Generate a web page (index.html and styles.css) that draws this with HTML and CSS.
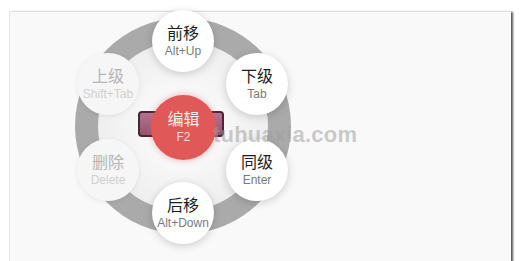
FILE: index.html
```html
<!DOCTYPE html>
<html>
<head>
<meta charset="utf-8">
<link rel="stylesheet" href="styles.css">
</head>
<body>
<div class="panel">
  <div class="menu">
    <div class="ring"><div class="ring-inner"></div></div>
    <div class="bar"></div>
    <div class="node center"><span class="cn">编辑</span><span class="key">F2</span></div>
    <div class="node n-top"><span class="cn">前移</span><span class="key">Alt+Up</span></div>
    <div class="node n-tr"><span class="cn">下级</span><span class="key">Tab</span></div>
    <div class="node n-br"><span class="cn">同级</span><span class="key">Enter</span></div>
    <div class="node n-bottom"><span class="cn">后移</span><span class="key">Alt+Down</span></div>
    <div class="node n-bl disabled"><span class="cn">删除</span><span class="key">Delete</span></div>
    <div class="node n-tl disabled"><span class="cn">上级</span><span class="key">Shift+Tab</span></div>
    <div class="watermark">tuhuaxia.com</div>
  </div>
</div>
</body>
</html>
```
FILE: styles.css
```css
html, body {
  margin: 0;
  background: #ffffff;
}
body {
  width: 521px;
  height: 261px;
  overflow: hidden;
  font-family: "Liberation Sans", Arial, sans-serif;
}
.panel {
  margin: 11px 0 0 9px;
  width: 501px;
  height: 260px;
  background: #f9f9f9;
  border-top: 1px solid #e2e2e2;
  border-left: 1px solid #e6e6e6;
  box-shadow: 3px 0 2px -1px #555555;
  position: relative;
}
.menu {
  position: relative;
  width: 100%;
  height: 100%;
}
.ring {
  position: absolute;
  left: 65px;
  top: 6px;
  width: 216px;
  height: 216px;
  border-radius: 50%;
  background: radial-gradient(circle, #aaaaaa 75%, #9e9e9e 90%, #989898 100%);
}
.ring-inner {
  position: absolute;
  left: 23px;
  top: 23px;
  width: 170px;
  height: 170px;
  border-radius: 50%;
  background: radial-gradient(circle, #f7f7f7 35%, #ececec 80%, #e2e2e2 100%);
}
.bar {
  position: absolute;
  left: 128px;
  top: 99px;
  width: 82px;
  height: 22px;
  border: 2px solid #4d2433;
  border-radius: 4px;
  background: linear-gradient(#b37590, #935370);
}
.node {
  position: absolute;
  width: 62px;
  height: 62px;
  margin: -31px 0 0 -31px;
  border-radius: 50%;
  background: #ffffff;
  box-shadow: 0 2px 8px rgba(0,0,0,0.18);
  display: flex;
  flex-direction: column;
  align-items: center;
  justify-content: center;
  gap: 2px;
  padding-bottom: 2px;
  box-sizing: border-box;
}
.cn {
  font-family: "Noto Sans CJK SC", sans-serif;
  font-size: 16px;
  line-height: 19px;
  color: #1e1e1e;
}
.key {
  font-size: 12px;
  line-height: 14px;
  color: #7a7a7a;
}
.center {
  left: 173px;
  top: 115px;
  width: 65px;
  height: 65px;
  margin: -32px 0 0 -32px;
  background: #e05858;
  box-shadow: 0 0 6px rgba(230,90,90,0.45);
}
.center .cn { color: #fbecec; }
.center .key { color: #f6d6d6; }
.n-top { left: 173px; top: 29px; }
.n-tr { left: 247px; top: 72px; }
.n-br { left: 247px; top: 158px; }
.n-bottom { left: 173px; top: 201px; }
.n-bl { left: 98px; top: 158px; }
.n-tl { left: 98px; top: 72px; }
.disabled {
  background: #f6f6f6;
  box-shadow: 0 1px 5px rgba(0,0,0,0.08);
}
.disabled .cn { color: #b5b5b5; }
.disabled .key { color: #d0d0d0; }
.watermark {
  position: absolute;
  left: 203px;
  top: 110px;
  font-family: "Liberation Sans", Arial, sans-serif;
  font-weight: bold;
  font-size: 22px;
  color: rgba(160,160,160,0.55);
  letter-spacing: 0.2px;
}
```
